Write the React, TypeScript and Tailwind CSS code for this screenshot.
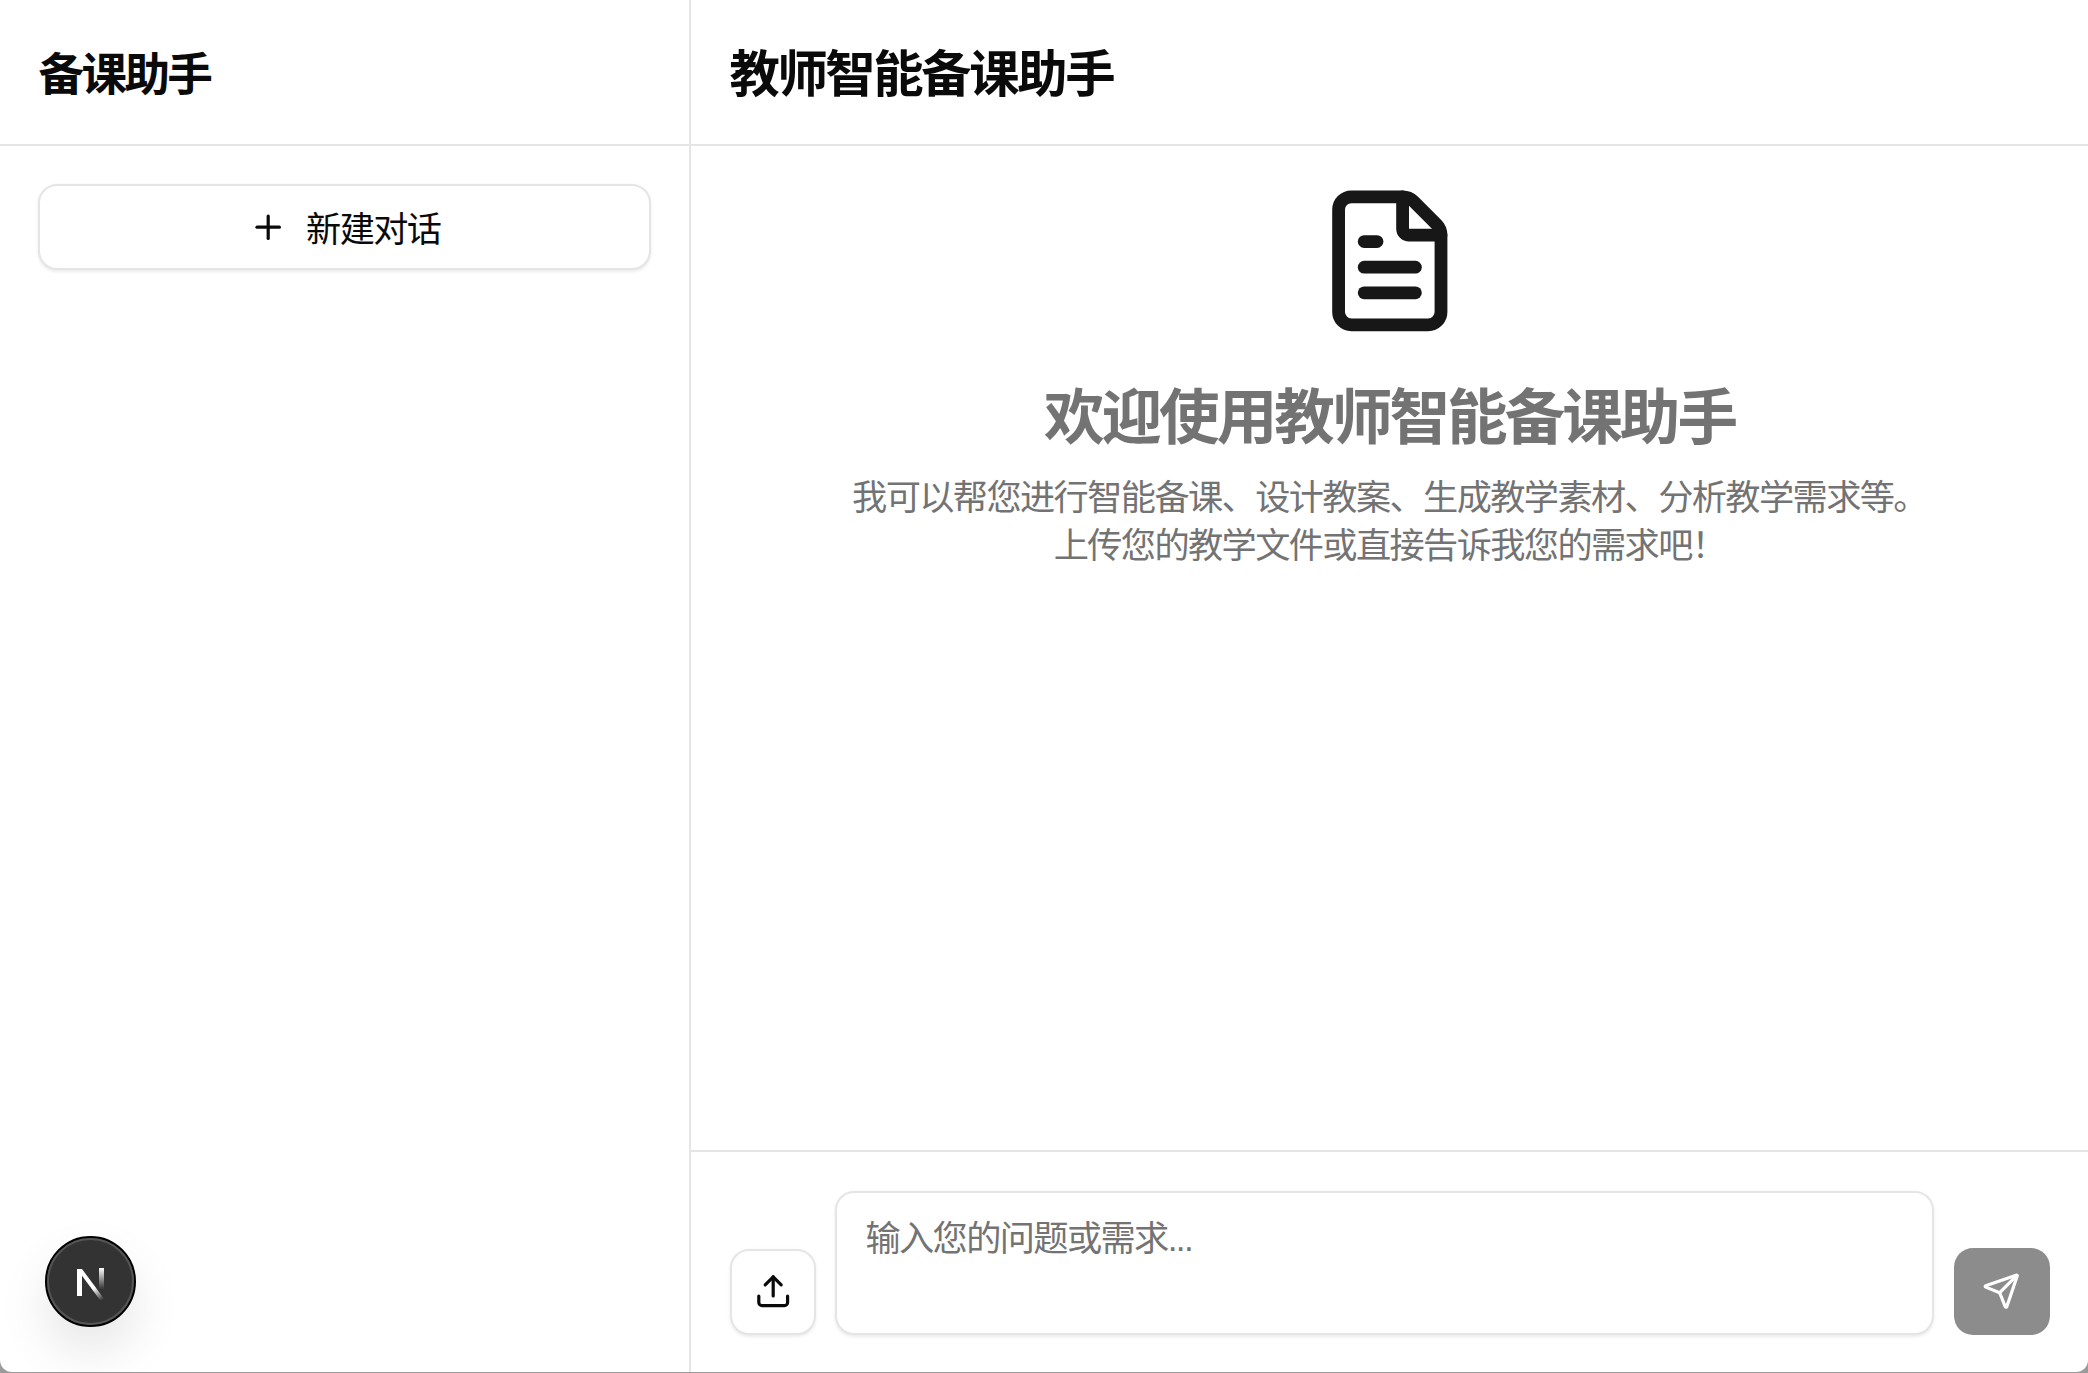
import { FileText, Plus, Send, Upload } from "lucide-react"

const fontStack = "font-['Liberation_Sans','Noto_Sans_CJK_SC',sans-serif]"

function DevBadge() {
  return (
    <div className="absolute left-[45px] top-[1236px] size-[91px] rounded-full bg-[#333333] border-2 border-black shadow-[0_25px_50px_rgba(0,0,0,0.1)] flex items-center justify-center">
      <div className="absolute inset-0 rounded-full border-2 border-[#555555]"></div>
      <svg width="32" height="34" viewBox="0 0 32 34" fill="none" className="ml-[1px] mt-[2px]">
        <defs>
          <linearGradient id="nDiag" x1="6" y1="4" x2="29" y2="33" gradientUnits="userSpaceOnUse">
            <stop offset="0.6" stopColor="#ffffff" />
            <stop offset="1" stopColor="#ffffff" stopOpacity="0" />
          </linearGradient>
          <linearGradient id="nRight" x1="26" y1="2" x2="26" y2="22" gradientUnits="userSpaceOnUse">
            <stop offset="0" stopColor="#ffffff" />
            <stop offset="1" stopColor="#ffffff" stopOpacity="0.05" />
          </linearGradient>
        </defs>
        <rect x="2" y="3" width="5" height="27" fill="#ffffff" />
        <path d="M2 3h5l23 31h-5z" fill="url(#nDiag)" />
        <rect x="24" y="2" width="5" height="21" fill="url(#nRight)" />
      </svg>
    </div>
  )
}

export default function App() {
  return (
    <div className={`${fontStack} relative h-[1373px] w-full bg-[#9a9a9a] overflow-hidden`}>
      <div className="flex h-[1372px] w-full rounded-b-[12px] bg-white overflow-hidden">

        {/* sidebar */}
        <aside className="flex w-[691px] shrink-0 flex-col border-r-2 border-[#e5e5e5]">
          <div className="flex h-[146px] items-center border-b-2 border-[#e5e5e5] px-[38.4px] pt-[8px]">
            <h1 className="text-[45.6px] leading-[64px] tracking-[-2.6px] font-bold text-[#0a0a0a]">备课助手</h1>
          </div>
          <div className="p-[38.4px]">
            <button className="flex h-[86px] w-full items-center justify-center gap-[19.2px] rounded-[19.2px] border-2 border-[#e5e5e5] bg-white text-[35.2px] tracking-[-1.6px] text-[#0a0a0a] shadow-[0_1.6px_3.2px_rgba(0,0,0,0.08)]">
              <Plus size={38.4} />
              <span className="pt-[6px]">新建对话</span>
            </button>
          </div>
        </aside>

        {/* main */}
        <main className="flex min-w-0 flex-1 flex-col">
          <div className="flex h-[146px] items-center border-b-2 border-[#e5e5e5] px-[38.4px] pt-[6px]">
            <h2 className="text-[50.4px] leading-[64px] tracking-[-2.4px] font-bold text-[#0a0a0a]">教师智能备课助手</h2>
          </div>

          <div className="flex flex-1 flex-col items-center pt-[38.4px] text-center">
            <FileText size={153.6} strokeWidth={2} className="text-[#171717]" />
            <h3 className="mt-[48px] text-[60.6px] leading-[64px] tracking-[-3px] font-bold text-[#737373]">欢迎使用教师智能备课助手</h3>
            <p className="mt-[24px] text-[35.2px] leading-[48px] tracking-[-1.6px] text-[#737373]">
              我可以帮您进行智能备课、设计教案、生成教学素材、分析教学需求等。
              <br />
              上传您的教学文件或直接告诉我您的需求吧！
            </p>
          </div>

          <div className="flex items-end gap-[19.2px] border-t-2 border-[#e5e5e5] pt-[38.4px] pr-[38.4px] pb-[37.4px] pl-[39.4px]">
            <button className="mr-[-1px] flex h-[86px] w-[86px] shrink-0 items-center justify-center rounded-[19.2px] border-2 border-[#e5e5e5] bg-white text-[#0a0a0a] shadow-[0_1.6px_3.2px_rgba(0,0,0,0.08)]">
              <Upload size={38.4} />
            </button>
            <textarea
              placeholder="输入您的问题或需求..."
              className="h-[144px] min-w-0 flex-1 resize-none rounded-[19.2px] border-2 border-[#e5e5e5] bg-white px-[28.8px] pt-[22px] pb-[19.2px] text-[35.2px] leading-[48px] tracking-[-1.6px] shadow-[0_1.6px_3.2px_rgba(0,0,0,0.08)] outline-none placeholder:text-[#737373]"
            ></textarea>
            <button className="flex h-[87px] w-[96px] shrink-0 items-center justify-center rounded-[19.2px] bg-[#8c8c8c] text-white">
              <Send size={38.4} />
            </button>
          </div>
        </main>
      </div>

      <DevBadge />
    </div>
  )
}
